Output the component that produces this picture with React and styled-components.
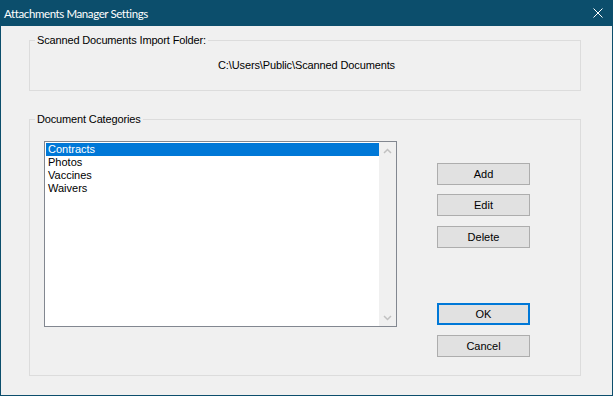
import React from "react";
import styled, { createGlobalStyle } from "styled-components";

const GlobalStyle = createGlobalStyle`
html, body {
  margin: 0;
  padding: 0;
  background: #f0f0f0;
}
* {
  box-sizing: border-box;
}
`

const Window = styled.div`
width: 613px;
height: 396px;
display: flex;
flex-direction: column;
background: #f0f0f0;
border: 1px solid #0c4e6c;
border-top: none;
font-family: "Liberation Sans", Arial, sans-serif;
font-size: 11px;
color: #000;
`

const TitleBar = styled.div`
height: 26px;
flex-shrink: 0;
display: flex;
align-items: center;
justify-content: space-between;
padding: 0 9px 0 3px;
background: #0c4e6c;
color: #fff;
font-family: Lato, "Liberation Sans", sans-serif;
font-size: 11.5px;
letter-spacing: -0.4px;
`

const Group = styled.fieldset`
width: 552px;
flex-shrink: 0;
margin: ${p => p.$top}px 0 0 28px;
padding: ${p => p.$pt}px 0 ${p => p.$pb}px 0;
border: 1px solid #dcdcdc;
min-width: 0;
`

const Legend = styled.legend`
margin-left: 5px;
padding: 0 2px;
line-height: 15px;
letter-spacing: -0.15px;
`

const PathText = styled.div`
text-align: center;
line-height: 15px;
letter-spacing: -0.12px;
padding-left: 3px;
`

const GroupBody = styled.div`
display: flex;
align-items: flex-start;
padding-left: 14px;
`

const ListBox = styled.div`
width: 353px;
height: 186px;
display: flex;
background: #fff;
border: 1px solid #828790;
`

const Items = styled.div`
flex: 1;
padding: 1px 0 0 1px;
`

const Item = styled.div`
height: 13px;
line-height: 13px;
padding-left: 2px;
background: ${p => (p.$selected ? "#0078d7" : "transparent")};
color: ${p => (p.$selected ? "#fff" : "#000")};
`

const ScrollBar = styled.div`
width: 17px;
display: flex;
flex-direction: column;
justify-content: space-between;
background: #f0f0f0;
`

const Arrow = styled.div`
height: 17px;
display: flex;
align-items: center;
justify-content: center;
`

const Buttons = styled.div`
width: 93px;
margin-left: 40px;
display: flex;
flex-direction: column;
`

const Button = styled.button`
height: 22px;
width: 93px;
margin-top: ${p => p.$mt}px;
padding: 0;
background: #e1e1e1;
border: ${p => (p.$default ? "2px solid #0078d7" : "1px solid #adadad")};
font-family: "Liberation Sans", Arial, sans-serif;
font-size: 11px;
color: #000;
`

const Chevron = ({ down }) => (
  <svg width="9" height="6" viewBox="0 0 9 6">
    <polyline
      points={down ? "1,1 4.5,4.5 8,1" : "1,5 4.5,1.5 8,5"}
      fill="none"
      stroke="#c1c1c1"
      strokeWidth="1.5"
    />
  </svg>
)

const categories = ["Contracts", "Photos", "Vaccines", "Waivers"]

const App = () => {
  return (
    <>
      <GlobalStyle />
      <Window>
        <TitleBar>
          <span>Attachments Manager Settings</span>
          <svg width="10" height="10" viewBox="0 0 10 10">
            <path d="M0.5 0.5 L9.5 9.5 M9.5 0.5 L0.5 9.5" stroke="#fff" strokeWidth="1" />
          </svg>
        </TitleBar>

        <Group $top={7} $pt={10} $pb={17}>
          <Legend>Scanned Documents Import Folder:</Legend>
          <PathText>C:\Users\Public\Scanned Documents</PathText>
        </Group>

        <Group $top={21} $pt={14} $pb={18}>
          <Legend>Document Categories</Legend>
          <GroupBody>
            <ListBox>
              <Items>
                {categories.map((c, i) => (
                  <Item key={c} $selected={i === 0}>{c}</Item>
                ))}
              </Items>
              <ScrollBar>
                <Arrow><Chevron /></Arrow>
                <Arrow><Chevron down /></Arrow>
              </ScrollBar>
            </ListBox>
            <Buttons>
              <Button $mt={22}>Add</Button>
              <Button $mt={9}>Edit</Button>
              <Button $mt={10}>Delete</Button>
              <Button $mt={55} $default>OK</Button>
              <Button $mt={10}>Cancel</Button>
            </Buttons>
          </GroupBody>
        </Group>
      </Window>
    </>
  )
}

export default App;
